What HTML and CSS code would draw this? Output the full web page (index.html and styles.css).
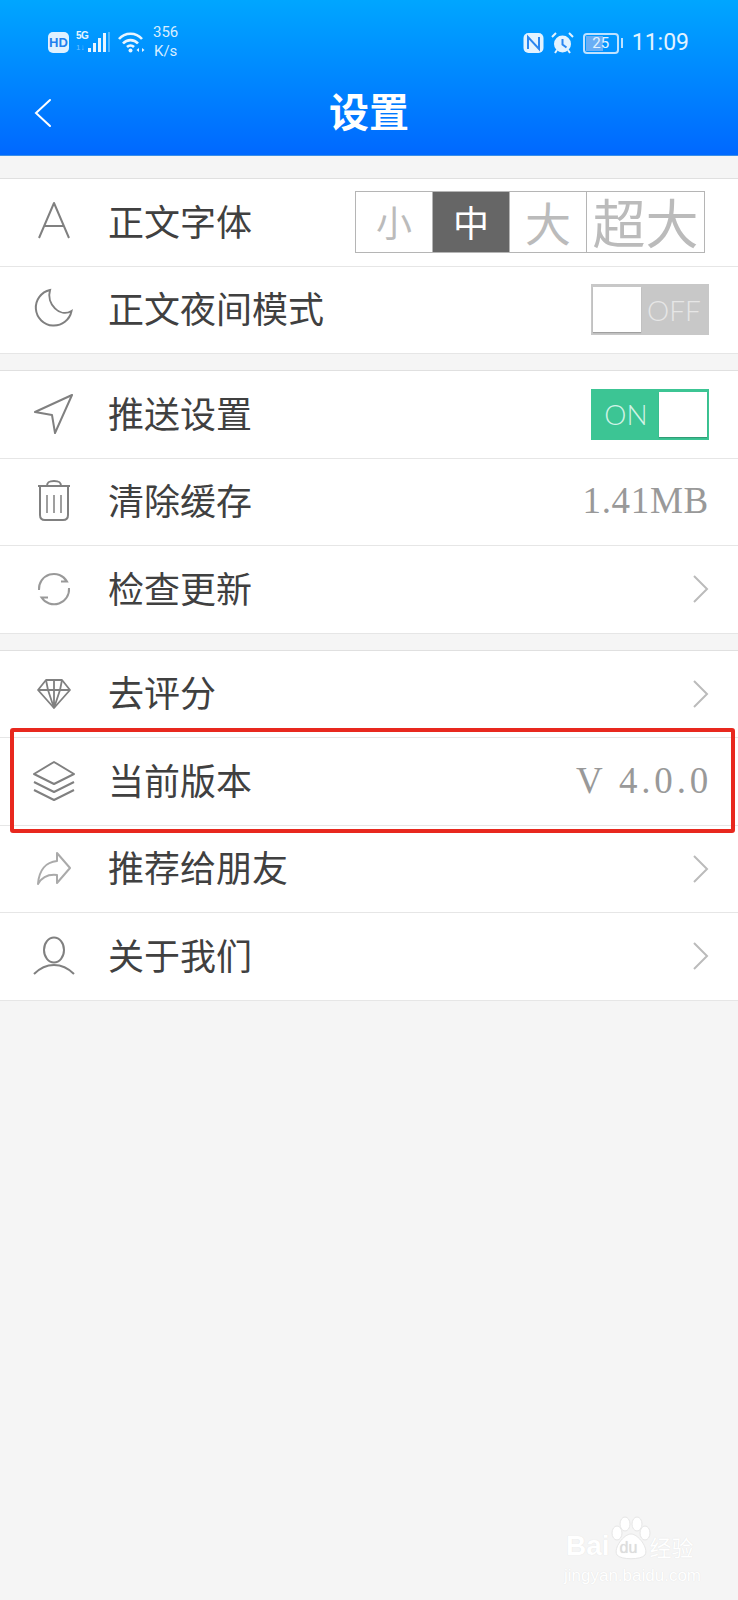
FILE: index.html
```html
<!DOCTYPE html>
<html lang="zh-CN">
<head>
  <meta charset="UTF-8">
  <meta name="viewport" content="width=device-width, initial-scale=1.0">
  <title>设置</title>
  <link rel="stylesheet" href="styles.css">
</head>
<body>
  <div class="page">
    <header class="header">
      <div class="statusbar">
        <div class="status-left">
          <span class="hd">HD</span>
          <div class="net-type"><span class="five-g">5G</span><span class="net-arrows">1↓</span></div>
          <svg class="signal" width="24" height="22" viewBox="0 0 24 22">
            <rect x="0" y="16" width="3" height="4" fill="#e8f5ff"/>
            <rect x="5" y="11" width="3" height="9" fill="#e8f5ff"/>
            <rect x="10" y="6" width="3" height="14" fill="#e8f5ff"/>
            <rect x="15" y="1" width="3" height="19" fill="#e8f5ff"/>
            <rect x="20" y="0" width="2" height="20" fill="#e8f5ff" opacity="0.35"/>
          </svg>
          <svg class="wifi" width="28" height="22" viewBox="0 0 28 22" fill="none" stroke="#e8f5ff" stroke-width="2.6">
            <path d="M1 7 C7 0 18 0 24 7"/>
            <path d="M5 11.500 C9 7 16 7 20 11.500"/>
            <path d="M9 15 C11 13 14 13 16 15"/>
            <circle cx="12.500" cy="18.500" r="2" fill="#e8f5ff" stroke="none"/>
            <path d="M21 16 l-2.500 2 l2.500 2z M24 16 l2.500 2 l-2.500 2z" fill="#e8f5ff" stroke="none"/>
          </svg>
          <div class="speed"><span>356</span><span>K/s</span></div>
        </div>
        <div class="status-right">
          <svg width="21" height="22" viewBox="0 0 21 22">
            <rect x="0.500" y="1" width="20" height="20" rx="5" fill="#e3f3ff"/>
            <path d="M5 17V5l11 12V5" fill="none" stroke="#2a86f0" stroke-width="2"/>
          </svg>
          <svg width="23" height="22" viewBox="0 0 23 22">
            <circle cx="11.500" cy="12" r="8.500" fill="#e3f3ff"/>
            <path d="M11.500 7v5.500l4 3" fill="none" stroke="#2a86f0" stroke-width="2"/>
            <path d="M1 5l4-4M22 5l-4-4M4 21l2-3M19 21l-2-3" fill="none" stroke="#e3f3ff" stroke-width="2"/>
          </svg>
          <div class="battery"><span class="battery-body"><span class="battery-fill"></span><span class="battery-num">25</span></span><span class="battery-nib"></span></div>
          <span class="clock">11:09</span>
        </div>
      </div>
      <div class="nav">
        <svg class="back" width="18" height="30" viewBox="0 0 18 30" fill="none" stroke="#fff" stroke-width="2" stroke-linecap="round">
          <path d="M16 2 L2 15 L16 28"/>
        </svg>
        <h1>设置</h1>
      </div>
    </header>

    <section class="group">
      <div class="row">
        <div class="row-icon icon-up">
          <svg width="34" height="38" viewBox="0 0 34 38" fill="none" stroke="#808080" stroke-width="2" stroke-linejoin="round">
            <path d="M2 37 L17 2 L32 37 M7.500 25 H26.500"/>
          </svg>
        </div>
        <span class="row-label">正文字体</span>
        <div class="font-size">
          <span class="fs fs-s">小</span>
          <span class="fs fs-m">中</span>
          <span class="fs fs-l">大</span>
          <span class="fs fs-xl">超大</span>
        </div>
      </div>
      <div class="row">
        <div class="row-icon icon-up">
          <svg width="40" height="40" viewBox="0 0 40 40" fill="none" stroke="#808080" stroke-width="2">
            <path d="M16 2 A18 18 0 1 0 37.500 23 C26 30 12 16 16 2Z"/>
          </svg>
        </div>
        <span class="row-label">正文夜间模式</span>
        <div class="toggle toggle-off"><span class="knob"></span><span class="toggle-text">OFF</span></div>
      </div>
    </section>

    <section class="group">
      <div class="row">
        <div class="row-icon">
          <svg width="40" height="42" viewBox="0 0 40 42" fill="none" stroke="#808080" stroke-width="2" stroke-linejoin="round">
            <path d="M38 2 L1 19 L18 22 L21 40 Z"/>
          </svg>
        </div>
        <span class="row-label">推送设置</span>
        <div class="toggle toggle-on"><span class="toggle-text">ON</span><span class="knob"></span></div>
      </div>
      <div class="row">
        <div class="row-icon icon-up">
          <svg width="36" height="42" viewBox="0 0 36 42" fill="none" stroke="#808080" stroke-width="2">
            <path d="M11 7 C11 3 13 2 18 2 C23 2 25 3 25 7"/>
            <path d="M2 7 H34"/>
            <path d="M4 8 V36 Q4 41 9 41 H27 Q32 41 32 36 V8"/>
            <path d="M11 16 V34 M18 16 V34 M25 16 V34" stroke-width="1.500"/>
          </svg>
        </div>
        <span class="row-label">清除缓存</span>
        <span class="row-value value-size">1.41MB</span>
      </div>
      <div class="row">
        <div class="row-icon">
          <svg width="40" height="40" viewBox="0 0 40 40" fill="none" stroke="#999" stroke-width="2">
            <path d="M5 21 A15 15 0 0 1 33 12.500 L27 12.500"/>
            <path d="M35 19 A15 15 0 0 1 7.500 28.500 L14 28.500"/>
          </svg>
        </div>
        <span class="row-label">检查更新</span>
        <svg class="chevron" width="17" height="28" viewBox="0 0 17 28" fill="none" stroke="#bbb" stroke-width="2">
          <path d="M2 1 L15 14 L2 27"/>
        </svg>
      </div>
    </section>

    <section class="group">
      <div class="row">
        <div class="row-icon">
          <svg width="36" height="32" viewBox="0 0 36 32" fill="none" stroke="#808080" stroke-width="1.800" stroke-linejoin="round">
            <path d="M10 2 H26 L34 12 L18 30 L2 12 Z"/>
            <path d="M2 12 H34 M10 2 L12 12 L18 30 M26 2 L24 12 L18 30 M18 2 V30"/>
          </svg>
        </div>
        <span class="row-label">去评分</span>
        <svg class="chevron" width="17" height="28" viewBox="0 0 17 28" fill="none" stroke="#bbb" stroke-width="2">
          <path d="M2 1 L15 14 L2 27"/>
        </svg>
      </div>
      <div class="row">
        <div class="highlight"></div>
        <div class="row-icon">
          <svg width="44" height="42" viewBox="0 0 44 42" fill="none" stroke="#808080" stroke-width="2" stroke-linejoin="round">
            <path d="M22 2 L42 14 L22 24 L2 14 Z"/>
            <path d="M2 22 L22 32 L42 22 M2 30 L22 40 L42 30"/>
          </svg>
        </div>
        <span class="row-label">当前版本</span>
        <span class="row-value value-version">V 4.0.0</span>
      </div>
      <div class="row">
        <div class="row-icon">
          <svg width="36" height="34" viewBox="0 0 36 34" fill="none" stroke="#aaa" stroke-width="2" stroke-linejoin="round">
            <path d="M21 1 L34 16 L21 31 V23 C12 22 6 25 2 32 C3 18 10 10 21 9 Z"/>
          </svg>
        </div>
        <span class="row-label">推荐给朋友</span>
        <svg class="chevron" width="17" height="28" viewBox="0 0 17 28" fill="none" stroke="#bbb" stroke-width="2">
          <path d="M2 1 L15 14 L2 27"/>
        </svg>
      </div>
      <div class="row">
        <div class="row-icon">
          <svg width="44" height="40" viewBox="0 0 44 40" fill="none" stroke="#808080" stroke-width="2">
            <ellipse cx="22" cy="14" rx="10" ry="12.500"/>
            <path d="M2 38 C9 31 15 29 22 29 C29 29 35 31 42 38"/>
          </svg>
        </div>
        <span class="row-label">关于我们</span>
        <svg class="chevron" width="17" height="28" viewBox="0 0 17 28" fill="none" stroke="#bbb" stroke-width="2">
          <path d="M2 1 L15 14 L2 27"/>
        </svg>
      </div>
    </section>

    <div class="watermark">
      <div class="wm-logo">
        <span class="wm-bai">Bai</span>
        <div class="wm-paw">
          <svg width="42" height="44" viewBox="0 0 42 44" fill="#fff" stroke="#e6e6e6" stroke-width="1">
            <ellipse cx="7" cy="17" rx="5" ry="7"/>
            <ellipse cx="15" cy="8" rx="5" ry="7"/>
            <ellipse cx="27" cy="8" rx="5" ry="7"/>
            <ellipse cx="35" cy="17" rx="5" ry="7"/>
            <path d="M21 18 C28 18 39 32 35 39 C31 44 11 44 7 39 C3 32 14 18 21 18Z"/>
          </svg>
          <span class="wm-du">du</span>
        </div>
        <span class="wm-jy">经验</span>
      </div>
      <div class="wm-url">jingyan.baidu.com</div>
    </div>
  </div>
</body>
</html>
```

FILE: styles.css
```css
* {
  box-sizing: border-box;
}

body {
  margin: 0;
  background-color: #f5f5f5;
  font-family: "Noto Sans CJK SC", "Liberation Sans", sans-serif;
  color: #404040;
}

.page {
  position: relative;
  height: 1600px;
  overflow: hidden;
}

/* header */
.header {
  height: 156px;
  background: linear-gradient(to bottom, #00a6ff, #0068ff);
  border-bottom: 1px solid #3a8fe8;
  color: #fff;
}

.statusbar {
  height: 70px;
  padding: 23px 49px 0 48px;
  display: flex;
  justify-content: space-between;
  align-items: flex-start;
}

.status-left {
  display: flex;
  align-items: flex-start;
}

.hd {
  width: 21px;
  height: 21px;
  margin-top: 9px;
  border-radius: 5px;
  background-color: #dff1ff;
  color: #1f80ee;
  font-family: "Liberation Sans", sans-serif;
  font-size: 13px;
  font-weight: bold;
  line-height: 21px;
  text-align: center;
}

.net-type {
  width: 12px;
  margin: 8px 0 0 7px;
  display: flex;
  flex-direction: column;
  font-family: "Liberation Sans", sans-serif;
  font-weight: bold;
  line-height: 10px;
}

.five-g {
  font-size: 10px;
  letter-spacing: -0.5px;
  color: #e8f5ff;
}

.net-arrows {
  margin-top: 2px;
  font-size: 8px;
  font-weight: normal;
  color: rgba(255, 255, 255, 0.45);
}

.signal {
  margin: 9px 0 0 0;
}

.wifi {
  margin: 9px 0 0 6px;
}

.speed {
  margin-left: 7px;
  display: flex;
  flex-direction: column;
  align-items: center;
  font-family: Roboto, sans-serif;
  font-size: 15px;
  line-height: 19px;
  color: #d8eeff;
}

.status-right {
  display: flex;
  align-items: center;
  margin-top: 6px;
}

.status-right svg {
  margin-right: 7px;
}

.battery {
  display: flex;
  align-items: center;
  margin: 0 9px 0 2px;
}

.battery-body {
  position: relative;
  width: 36px;
  height: 21px;
  border: 2px solid #bfe2ff;
  border-radius: 4px;
  text-align: center;
  font-family: Roboto, sans-serif;
  font-size: 15px;
  line-height: 17px;
  color: #e3f3ff;
}

.battery-fill {
  position: absolute;
  left: 1px;
  top: 1px;
  bottom: 1px;
  width: 17px;
  background-color: #6aaef5;
}

.battery-num {
  position: relative;
}

.battery-nib {
  width: 2px;
  height: 10px;
  margin-left: 2px;
  background-color: #bfe2ff;
}

.clock {
  font-family: Roboto, sans-serif;
  font-size: 23px;
  line-height: 28px;
  color: #e3f3ff;
}

.nav {
  position: relative;
  height: 85px;
  display: flex;
  align-items: center;
  justify-content: center;
}

.back {
  position: absolute;
  left: 34px;
  top: 28px;
}

h1 {
  margin: 0 0 4px;
  font-size: 40px;
  font-weight: bold;
  line-height: 81px;
}

/* list */
.group {
  margin-top: 16px;
  background-color: #fff;
  border-top: 1px solid #e0e0e0;
}

.header + .group {
  margin-top: 22px;
}

.row {
  position: relative;
  height: 87.5px;
  padding-right: 29px;
  display: flex;
  align-items: center;
  border-bottom: 1px solid #e6e6e6;
}

.row-icon {
  width: 108px;
  display: flex;
  justify-content: center;
}

.icon-up {
  margin-bottom: 4px;
}

.row-label {
  flex: 1;
  margin-bottom: 5px;
  font-size: 36px;
  line-height: 50px;
}

.row-value {
  margin-bottom: 2px;
  font-family: "Liberation Serif", serif;
  font-size: 37px;
  color: #999;
}

.value-size {
  letter-spacing: 0.7px;
}

.value-version {
  letter-spacing: 3.8px;
  margin-right: -3px;
}

/* font size picker */
.font-size {
  width: 350px;
  height: 62px;
  margin-right: 4px;
  display: flex;
  border: 1px solid #b5b5b5;
  color: #bbb;
  line-height: 58px;
  text-align: center;
}

.fs {
  width: 77px;
  border-right: 1px solid #b5b5b5;
}

.fs-s {
  font-size: 36px;
}

.fs-m {
  font-size: 36px;
  background-color: #666;
  color: #fff;
}

.fs-l {
  font-size: 46px;
}

.fs-xl {
  flex: 1;
  font-size: 53px;
  border-right: none;
  white-space: nowrap;
}

/* switches */
.toggle {
  width: 118px;
  height: 51px;
  padding: 2px;
  display: flex;
  align-items: center;
  font-family: Lato, sans-serif;
  font-size: 28px;
  font-weight: 300;
}

.knob {
  width: 48px;
  height: 45px;
  background-color: #fff;
  box-shadow: 0 1px 1px rgba(0, 0, 0, 0.2);
}

.toggle-text {
  flex: 1;
  text-align: center;
}

.toggle-off {
  background-color: #c8c8c8;
  color: #e6e6e6;
}

.toggle-on {
  background-color: #3cc594;
  color: #d2f3e6;
}

/* red marker around the version row */
.highlight {
  position: absolute;
  top: -10px;
  left: 10px;
  right: 3px;
  bottom: -8px;
  border: 4px solid #e8281e;
  border-radius: 3px;
}

/* site watermark */
.watermark {
  position: absolute;
  right: 38px;
  bottom: 15px;
  width: 136px;
  color: #fff;
  text-shadow: 0 0 1px #ddd;
}

.wm-logo {
  display: flex;
  align-items: flex-end;
  height: 44px;
}

.wm-bai {
  margin-left: 2px;
  font-family: "Liberation Sans", sans-serif;
  font-size: 28px;
  font-weight: bold;
  line-height: 28px;
}

.wm-paw {
  position: relative;
  width: 40px;
  height: 44px;
}

.wm-du {
  position: absolute;
  left: 10px;
  bottom: 3px;
  font-family: "Liberation Sans", sans-serif;
  font-size: 16px;
  color: #ddd;
}

.wm-jy {
  font-size: 22px;
  line-height: 28px;
}

.wm-url {
  margin-top: 7px;
  font-family: "Liberation Sans", sans-serif;
  font-size: 17px;
  line-height: 18px;
  white-space: nowrap;
}
```
